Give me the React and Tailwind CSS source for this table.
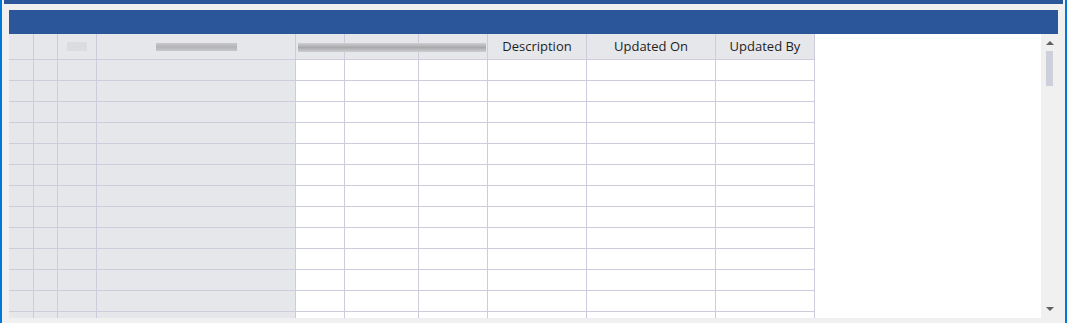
import React from 'react';

const COLS = [
  { w: 'w-[25px]', frozen: true },
  { w: 'w-[24px]', frozen: true },
  { w: 'w-[39px]', frozen: true },
  { w: 'w-[199px]', frozen: true },
  { w: 'w-[49px]' },
  { w: 'w-[74px]' },
  { w: 'w-[69px]' },
  { w: 'w-[99px]', label: 'Description' },
  { w: 'w-[129px]', label: 'Updated On' },
  { w: 'w-[99px]', label: 'Updated By' },
];

const ROWS = Array.from({ length: 13 }, (_, i) => i);

function HeaderRow() {
  return (
    <div className="relative flex h-[26px] shrink-0">
      {COLS.map((col, i) => (
        <div
          key={i}
          className={`${col.w} h-full shrink-0 border-r border-b border-[#cdcbdc] bg-[#e6e7eb] flex items-center justify-center text-[13px] text-[#1e1e1e]`}
        >
          {col.label}
          {i === 2 && <div className="w-[20px] h-[9px] bg-[#dcdce0]" />}
          {i === 3 && (
            <div className="w-[81px] h-[8px] bg-gradient-to-b from-[#c8c8cc] via-[#b4b4b8] to-[#c8c8cc] blur-[0.5px]" />
          )}
        </div>
      ))}
      {/* masked column captions spanning the editable columns */}
      <div className="absolute left-[289px] top-[9px] w-[188px] h-[9px] bg-gradient-to-b from-[#cfcfd2] via-[#a9a9ad] to-[#cfcfd2] blur-[0.6px]" />
    </div>
  );
}

function BodyRow() {
  return (
    <div className="flex h-[21px] shrink-0">
      {COLS.map((col, i) => (
        <div
          key={i}
          className={`${col.w} h-full shrink-0 border-r border-b border-[#cdcbdc] ${col.frozen ? 'bg-[#e6e7eb]' : 'bg-white'}`}
        />
      ))}
    </div>
  );
}

function ScrollBar() {
  return (
    <div className="w-[17px] h-full bg-[#f0f0f0] flex flex-col items-center">
      <div className="mt-[7px] w-0 h-0 border-x-[4px] border-x-transparent border-b-[4px] border-b-[#606060]" />
      <div className="mt-[6px] w-[7px] h-[35px] bg-[#cdd0da]" />
      <div className="flex-1" />
      <div className="mb-[7px] w-0 h-0 border-x-[4px] border-x-transparent border-t-[4px] border-t-[#606060]" />
    </div>
  );
}

export default function App() {
  return (
    <div
      className="w-[1067px] h-[323px] bg-[#f0f0f0] border-x-2 border-[#0078d7] overflow-hidden flex flex-col"
      style={{ fontFamily: '"Open Sans", "Noto Sans", sans-serif' }}
    >
      <div className="h-[4px] mx-[2px] bg-[#2b579a] shrink-0" />
      <div className="mt-[6px] mx-[7px] h-[24px] bg-[#2b579a] shrink-0" />
      <div className="mx-[7px] h-[284px] flex shrink-0">
        <div className="flex-1 bg-white overflow-hidden flex flex-col">
          <HeaderRow />
          {ROWS.map((r) => (
            <BodyRow key={r} />
          ))}
        </div>
        <ScrollBar />
      </div>
    </div>
  );
}
